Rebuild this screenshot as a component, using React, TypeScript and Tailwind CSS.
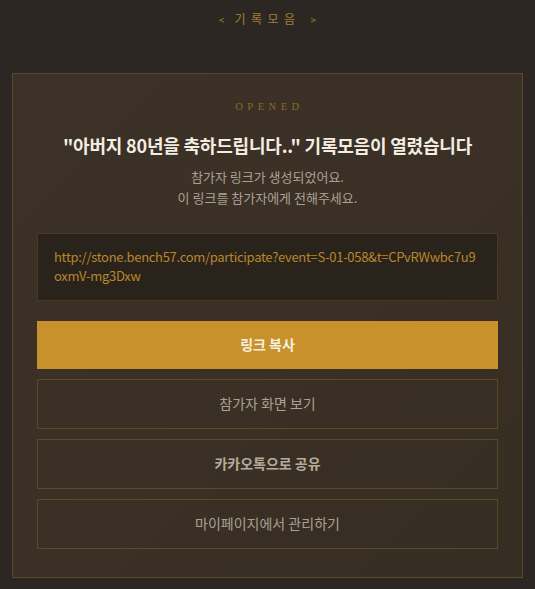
export default function App() {
  const url =
    "http://stone.bench57.com/participate?event=S-01-058&t=CPvRWwbc7u9oxmV-mg3Dxw";

  return (
    <div
      className="min-h-[589px] w-full bg-[#2c2722] px-3 pb-3"
      style={{ fontFamily: '"Noto Sans CJK KR", "Noto Sans", sans-serif' }}
    >
      {/* top nav */}
      <div className="flex h-[38px] items-center justify-center gap-[10px] text-[#a87f33]">
        <span className="text-[10px]">&lt;</span>
        <span className="text-[12px] tracking-[5.5px]">기록모음</span>
        <span className="text-[10px]">&gt;</span>
      </div>

      <div className="mt-[35px] border border-[#5a4828] bg-gradient-to-br from-[#3b3126] via-[#3a3025] to-[#362d23] px-6 pb-7 pt-[25px]">
        <p
          className="text-center text-[10.5px] tracking-[4.5px] pl-[4px] text-[#8c6a2a]"
          style={{ fontFamily: '"Liberation Serif", serif' }}
        >
          OPENED
        </p>

        <h1 className="mt-[17px] text-center text-[18px] font-bold leading-[26px] tracking-[-0.2px] text-[#f3ede2]">
          "아버지 80년을 축하드립니다.." 기록모음이 열렸습니다
        </h1>

        <div className="mt-[8px] text-center text-[13px] leading-[21px] text-[#aaa192]">
          <p>참가자 링크가 생성되었어요.</p>
          <p>이 링크를 참가자에게 전해주세요.</p>
        </div>

        <div className="mt-[25px] border border-[#4a3b20] bg-[#2a231b] px-4 pt-[13px] pb-[15px] text-[13px] leading-[19px] tracking-[-0.3px] text-[#b8862c] break-all">
          {url}
        </div>

        <div className="mt-[20px] flex flex-col gap-[10px]">
          <button className="h-[48px] w-full bg-[#c8912c] text-[14px] font-bold text-[#f7efdf]">
            링크 복사
          </button>
          <button className="h-[50px] w-full border border-[#5a4828] text-[14px] text-[#a9a192]">
            참가자 화면 보기
          </button>
          <button className="h-[50px] w-full border border-[#5a4828] text-[14px] font-bold text-[#b4ac9c]">
            카카오톡으로 공유
          </button>
          <button className="h-[50px] w-full border border-[#5a4828] text-[14px] text-[#a9a192]">
            마이페이지에서 관리하기
          </button>
        </div>
      </div>
    </div>
  );
}
